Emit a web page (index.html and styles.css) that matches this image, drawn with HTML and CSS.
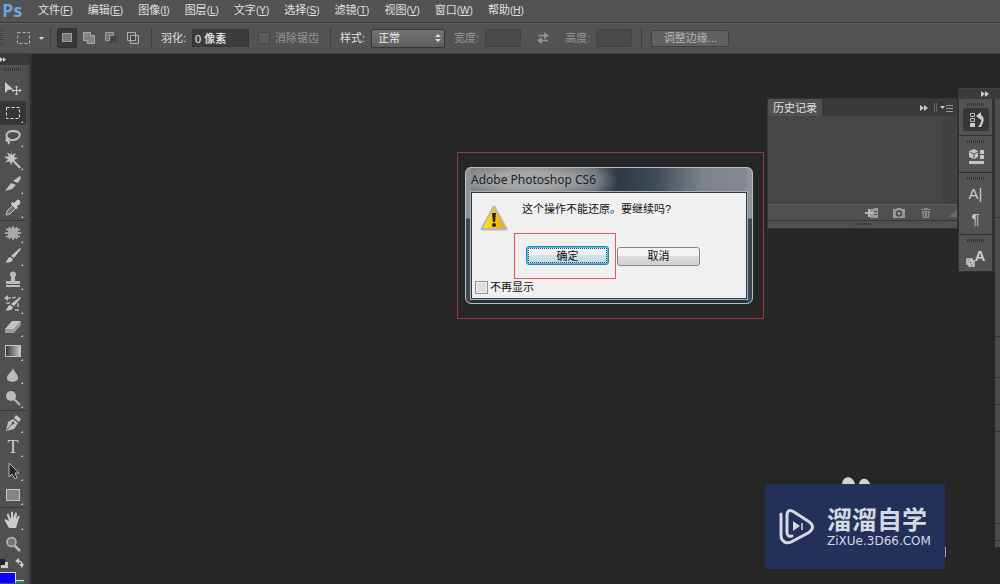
FILE: index.html
```
<!DOCTYPE html>
<html lang="zh-CN">
<head>
<meta charset="utf-8">
<meta name="viewport" content="width=device-width, initial-scale=1">
<title>Photoshop</title>
<link rel="stylesheet" href="styles.css">
</head>
<body>
<header>
  <nav class="menubar" aria-label="菜单">
    <span class="brand">Ps</span>
    <button>文件<span class="key">(<u>F</u>)</span></button>
    <button>编辑<span class="key">(<u>E</u>)</span></button>
    <button>图像<span class="key">(<u>I</u>)</span></button>
    <button>图层<span class="key">(<u>L</u>)</span></button>
    <button>文字<span class="key">(<u>Y</u>)</span></button>
    <button>选择<span class="key">(<u>S</u>)</span></button>
    <button>滤镜<span class="key">(<u>T</u>)</span></button>
    <button>视图<span class="key">(<u>V</u>)</span></button>
    <button>窗口<span class="key">(<u>W</u>)</span></button>
    <button>帮助<span class="key">(<u>H</u>)</span></button>
  </nav>
  <div class="options">
    <span class="handle"></span>
    <button class="preset" aria-label="工具预设">
      <svg width="28" height="14" viewBox="0 0 28 14"><rect x="1.500" y="1.500" width="12" height="11" fill="none" stroke="#b4b4b4" stroke-dasharray="3 2"/><path d="M23 6h5l-2.500 3z" fill="#ddd"/></svg>
    </button>
    <span class="divider"></span>
    <div class="modes">
      <button class="mode on" aria-label="新选区"><svg width="14" height="14" viewBox="0 0 14 14"><rect x="2.500" y="2.500" width="9" height="8" fill="#777" stroke="#a0a0a0"/></svg></button>
      <button class="mode" aria-label="添加到选区"><svg width="14" height="14" viewBox="0 0 14 14"><path d="M1.500 1.500h7v3h4v8h-7v-3h-4z" fill="#858585" stroke="#a8a8a8"/></svg></button>
      <button class="mode" aria-label="从选区减去"><svg width="14" height="14" viewBox="0 0 14 14"><rect x="5" y="5" width="8" height="7" fill="#454545"/><path d="M1.500 1.500h8v3h-4v5h-4z" fill="#777" stroke="#a0a0a0"/></svg></button>
      <button class="mode" aria-label="与选区交叉"><svg width="14" height="14" viewBox="0 0 14 14"><path d="M1.500 1.500h8v8h-8zM4.500 4.500h8v8h-8z" fill="none" stroke="#b0b0b0"/><path d="M5 5h4v4H5z" fill="#404040"/></svg></button>
    </div>
    <span class="divider"></span>
    <label class="field">羽化:<input class="box feather" value="0 像素"></label>
    <label class="check dim"><input type="checkbox" disabled>消除锯齿</label>
    <span class="divider"></span>
    <label class="field">样式:<span class="pick"><select><option>正常</option></select><svg width="6" height="8" viewBox="0 0 6 8"><path d="M0 3l3-3 3 3zM0 5h6L3 8z" fill="#ddd"/></svg></span></label>
    <label class="field dim">宽度:<input class="box size" disabled></label>
    <button class="swap dim" aria-label="交换宽高" disabled><svg width="14" height="12" viewBox="0 0 14 12"><path d="M2 3.500h7M5 8.500h7" stroke="#929292" stroke-width="1.500"/><path d="M8 0l5 3.500L8 7zM6 5L1 8.500 6 12z" fill="#929292"/></svg></button>
    <label class="field dim">高度:<input class="box size" disabled></label>
    <span class="divider"></span>
    <button class="refine" disabled>调整边缘...</button>
  </div>
</header>

<main class="workspace">
  <aside class="toolbox" aria-label="工具">
    <div class="toolhead"><svg width="7" height="5" viewBox="0 0 7 5"><path d="M0 0l3 2.500L0 5zM3 0l3 2.500L3 5z" fill="#ccc"/></svg></div>
    <div class="grip"></div>
    <div class="tools first">
      <button aria-label="移动"><svg viewBox="0 0 20 20"><path d="M2 3v11l3-3 5-1z" fill="#ccc"/><path d="M13.500 7v9M9 11.500h9M12 8.500L13.500 7 15 8.500M12 14.500l1.500 1.500 1.500-1.500M10.500 10L9 11.500l1.500 1.500M16.500 10l1.500 1.500-1.500 1.500" stroke="#ccc" fill="none"/></svg></button>
      <button class="on more" aria-label="矩形选框"><svg viewBox="0 0 20 20"><rect x="3.500" y="4.500" width="13" height="11" fill="none" stroke="#ddd" stroke-dasharray="3 2"/></svg></button>
      <button class="more" aria-label="套索"><svg viewBox="0 0 20 20"><path d="M6 12C1 9 4 4 10 4s8 3 6 6-7 4-10 2c-3-1-4 2-1 2 2 0 1 2 0 3" fill="none" stroke="#c4c4c4" stroke-width="1.800"/></svg></button>
      <button class="more" aria-label="魔棒"><svg viewBox="0 0 20 20"><path d="M8 1l1 4 4-2-2 4 4 1-4 2 7 7-1.500 1.500-7-7-1.500 4-1-4-5 1 3-3-4-3 5 0-2-4 4 2z" fill="#c4c4c4"/></svg></button>
      <button class="more" aria-label="切片"><svg viewBox="0 0 20 20"><path d="M2 17l6-8 5 2-4 4zM10 7l7-5 1 2-3 5z" fill="#c4c4c4"/></svg></button>
      <button class="more" aria-label="吸管"><svg viewBox="0 0 20 20"><path d="M3 17l1-4 6-6 3 3-6 6z" fill="#737373" stroke="#c4c4c4"/><path d="M9 4l2 1 3-3c3-1 4 2 3 4l-3 2 1 2-2 1-5-5z" fill="#ccc"/></svg></button>
    </div>
    <div class="tools second">
      <button class="more" aria-label="修复画笔"><svg viewBox="0 0 20 20"><path d="M6.500 4v12M10 3v14M13.500 4v12M3 6.500h14M2 10h16M3 13.500h14" stroke="#bbb" stroke-width="1.500"/><rect x="5" y="5" width="10" height="10" rx="3" fill="#a8a8a8"/></svg></button>
      <button class="more" aria-label="画笔"><svg viewBox="0 0 20 20"><path d="M17 2l1 1-7 9-3-2zM7 11l3 2c-1 4-5 4-8 3 3-1 2-4 5-5z" fill="#c8c8c8"/></svg></button>
      <button class="more" aria-label="仿制图章"><svg viewBox="0 0 20 20"><circle cx="10" cy="4.500" r="3" fill="#bbb"/><path d="M8 6h4v5h5v3H3v-3h5zM3 15h14v2H3z" fill="#bbb"/></svg></button>
      <button class="more" aria-label="历史记录画笔"><svg viewBox="0 0 20 20"><path d="M17 3l1 1-7 8-3-2zM7 11l3 2c-1 4-5 4-8 3 3-1 2-4 5-5z" fill="#c4c4c4"/><path d="M4 4h4c3 0 5 0 5-2M3 9h4M12 16h5M15 9v5" stroke="#b4b4b4" fill="none" stroke-width="1.500" stroke-dasharray="4 1"/><path d="M5 1v6L1 4z" fill="#bbb"/></svg></button>
      <button class="more" aria-label="橡皮擦"><svg viewBox="0 0 20 20"><path d="M2 12l7-8h9l-7 8z" fill="#c4c4c4"/><path d="M2 12h9v4H2zM11 12l7-8v4l-7 8z" fill="#999"/></svg></button>
      <button class="more" aria-label="渐变"><svg viewBox="0 0 20 20"><defs><linearGradient id="ramp"><stop stop-color="#333"/><stop offset="1" stop-color="#ccc"/></linearGradient></defs><rect x="2.500" y="4.500" width="15" height="11" fill="url(#ramp)" stroke="#c4c4c4"/></svg></button>
      <button class="more" aria-label="模糊"><svg viewBox="0 0 20 20"><path d="M10 3c1 4 5 6 5 10 0 5-11 5-11 0 0-4 5-6 6-10z" fill="#bbb"/></svg></button>
      <button class="more" aria-label="减淡"><svg viewBox="0 0 20 20"><circle cx="8" cy="8" r="5" fill="#bbb"/><path d="M11 11l6 6" stroke="#bbb" stroke-width="2"/></svg></button>
    </div>
    <div class="tools third">
      <button class="more" aria-label="钢笔"><svg viewBox="0 0 20 20"><path d="M3 18l2-9 5-3 5 4-4 6zM11 5l2-3 5 4-2 3z" fill="#c4c4c4"/><path d="M4 17l5-6" stroke="#555"/><circle cx="10" cy="10" r="1.500" fill="#555"/></svg></button>
      <button class="more type" aria-label="文字">T</button>
      <button class="more" aria-label="路径选择"><svg viewBox="0 0 20 20"><path d="M6 2v14l3-3 3 5 2-1-2-5h4z" fill="#252525" stroke="#bbb"/></svg></button>
      <button class="more" aria-label="矩形"><svg viewBox="0 0 20 20"><rect x="3.500" y="4.500" width="13" height="11" fill="#858585" stroke="#c4c4c4"/></svg></button>
    </div>
    <div class="tools fourth">
      <button class="more" aria-label="抓手"><svg viewBox="0 0 20 20"><path d="M6 18l-4-7c-1-2 1-2 2-1l2 1-2-6c0-2 2-2 2 0l2 4V3c0-2 2-2 2 0v5l2-5c1-1 2 0 2 1l-1 5 2-3c2-1 2 1 1 2l-3 10z" fill="#ccc"/></svg></button>
      <button aria-label="缩放"><svg viewBox="0 0 20 20"><circle cx="8.500" cy="8" r="4.500" fill="#777" stroke="#bbb" stroke-width="1.500"/><path d="M12 12l5 5" stroke="#bbb" stroke-width="2.500"/></svg></button>
    </div>
    <div class="reset">
      <svg width="8" height="10" viewBox="0 0 8 10"><path d="M3 4h5v6H1V7h2z" fill="#ccc"/><path d="M0 1h5v6H0z" fill="#222"/></svg>
      <svg width="9" height="10" viewBox="0 0 9 10"><path d="M3 3c3 0 4 1 4 4" fill="none" stroke="#ccc" stroke-width="1.500"/><path d="M0 3l4-3v6zM4 6h5L7 10z" fill="#ccc"/></svg>
    </div>
    <div class="swatches"><span class="front"></span><span class="back"></span></div>
  </aside>

  <div class="marked">
    <section class="dialog" role="dialog" aria-labelledby="dialog-title">
      <h1 id="dialog-title">Adobe Photoshop CS6</h1>
      <div class="sheet">
        <div class="message">
          <svg width="28" height="26" viewBox="0 0 28 26"><defs><linearGradient id="amber" x2="1" y2="0"><stop stop-color="#ffe51f"/><stop offset=".5" stop-color="#f6c516"/><stop offset="1" stop-color="#eaa51c"/></linearGradient></defs><path d="M14 2L2 24h24z" fill="url(#amber)" stroke="#b8b8b0" stroke-width="3" stroke-linejoin="round"/><path d="M14 3L3 23h22z" fill="url(#amber)"/><path d="M12 8h4l-1 9h-2z" fill="#222"/><circle cx="14" cy="20" r="2" fill="#222"/></svg>
          <p>这个操作不能还原。要继续吗?</p>
        </div>
        <div class="answers">
          <div class="ring"><button class="answer primary">确定</button></div>
          <button class="answer">取消</button>
        </div>
        <label class="again"><input type="checkbox">不再显示</label>
      </div>
    </section>
  </div>

  <div class="docks">
    <section class="history">
      <div class="tabs">
        <button class="tab">历史记录</button>
        <svg width="34" height="10" viewBox="0 0 34 10"><path d="M0 2l4 3-4 3zM4 2l4 3-4 3z" fill="#ccc"/><path d="M14.500 0v9M16.500 0v9" stroke="#666"/><path d="M20 3h5l-2.500 3z" fill="#ccc"/><path d="M26 2.500h7M26 5.500h7M26 8.500h7" stroke="#999"/></svg>
      </div>
      <div class="states"></div>
      <div class="actions">
        <button aria-label="从当前状态创建新文档"><svg width="14" height="12" viewBox="0 0 14 12"><path d="M5 2h3l1-1h4v10H5z" fill="#999"/><path d="M9 4h3v1H9zM9 7h3v1H9z" fill="#505050"/><path d="M0 6h8M4 2v8" stroke="#bbb" stroke-width="2"/></svg></button>
        <button aria-label="创建新快照"><svg width="14" height="12" viewBox="0 0 14 12"><path d="M1 2h3l1-1h4l1 1h3v9H1z" fill="#999"/><circle cx="7" cy="6.500" r="2.500" fill="#999" stroke="#484848" stroke-width="1.500"/></svg></button>
        <button aria-label="删除当前状态"><svg width="14" height="12" viewBox="0 0 14 12"><path d="M2 2h3V1h4v1h3v1H2zM3 4h8l-1 7H4z" fill="#8a8a8a"/><path d="M5.500 5v5M8.500 5v5" stroke="#555"/></svg></button>
        <svg width="8" height="8" viewBox="0 0 8 8"><path d="M0 8l8-8v8z" fill="#696969"/></svg>
      </div>
      <div class="grip foot"></div>
    </section>
    <aside class="rail">
      <div class="railhead"><svg width="8" height="6" viewBox="0 0 8 6"><path d="M0 0l4 3-4 3zM4 0l4 3-4 3z" fill="#ccc"/></svg></div>
      <div class="columns">
        <div class="icons">
          <div class="set"><div class="grip"></div><button class="on" aria-label="历史记录"><svg viewBox="0 0 20 20"><path d="M4.500 3.500h4v3h-4zM4.500 8.500h4v3h-4z" fill="none" stroke="#bbb"/><path d="M4 13h5v4H4z" fill="#ccc"/><path d="M10 6l5-4v3c4 2 3 7 0 12h-3c3-4 4-7 3-9v2z" fill="#ccc"/></svg></button></div>
          <div class="set"><div class="grip"></div><button aria-label="属性"><svg viewBox="0 0 20 20"><path d="M3 4l5-2 4 2v6l-4 2-5-2zM14 3h4v4h-4zM14 8h4v4h-4zM3 14h15v3H3z" fill="#c4c4c4"/><path d="M4 5l4 2 4-2M8 7v4" stroke="#555" fill="none"/></svg></button></div>
          <div class="set"><div class="grip"></div><button class="letter" aria-label="字符">A|</button><button class="letter" aria-label="段落">¶</button></div>
          <div class="set"><div class="grip"></div><button class="letter styles" aria-label="字符样式"><svg viewBox="0 0 9 9"><path d="M1 1h5v5H1zM3 3h5v5H3z" fill="none" stroke="#ccc" stroke-width="1.500"/></svg><b>A</b></button></div>
        </div>
        <div class="edge"><i class="long"></i><i class="long"></i><i class="row"></i><i class="short"></i><i class="short"></i><i class="tall"></i><i class="end"></i><i class="last"></i></div>
      </div>
    </aside>
  </div>

  <div class="watermark">
    <svg class="mark" width="36" height="38" viewBox="0 0 36 38"><path d="M2 6v21c0 7 6 10 12 6l15-8c6-4 6-8 0-12L15 4C10 1 8 3 8 8v16c0 4 2 5 5 4" fill="none" stroke="#d5d9e2" stroke-width="3" stroke-linecap="round"/><path d="M14 13l7 5-7 5z" fill="#d5d9e2"/><path d="M23 15v7" stroke="#d5d9e2" stroke-width="1.500"/></svg>
    <div class="wordmark"><strong>溜溜自学</strong><span>ZiXUe.3D66.COM</span></div>
    <svg class="dots" width="30" height="7" viewBox="0 0 30 7"><path d="M0 7c1-9 11-9 13 0zM17 7c1-7 9-7 11 0z" fill="#d4d4d4"/></svg>
    <i class="sliver"></i>
  </div>
</main>
</body>
</html>
```
FILE: styles.css
```
* { box-sizing: border-box; }
body {
  margin: 0;
  min-height: 100vh;
  display: flex;
  flex-direction: column;
  background: #262626;
  color: #e0e0e0;
  font: 11px/16px "Liberation Sans", "Noto Sans CJK SC", sans-serif;
  overflow: hidden;
}
button, input, select { font: inherit; color: inherit; margin: 0; padding: 0; border: 0; background: none; }
svg { display: block; }
header { background: #535353; }

.menubar { display: flex; align-items: center; height: 22px; gap: 15px; padding: 0 0 2px 2px; }
.menubar button { white-space: nowrap; height: 20px; }
.brand { width: 21px; font: bold 18px/20px "Open Sans", sans-serif; color: #6fa5d8; }
.key { font-size: 10px; }

.options {
  display: flex;
  align-items: center;
  height: 32px;
  gap: 9px;
  border-top: 1px solid #3a3a3a;
  border-bottom: 1px solid #404040;
  box-shadow: inset 0 1px #606060;
}
.handle { width: 3px; height: 18px; background: repeating-linear-gradient(#3d3d3d 0 1px, #5c5c5c 1px 2px); }
.preset { margin-left: 4px; }
.divider { width: 1px; height: 20px; background: #3d3d3d; }
.preset + .divider { margin-left: -3px; }
.modes { display: flex; gap: 2px; margin: 0 -1px 0 -3px; }
.mode { width: 20px; height: 20px; display: grid; place-items: center; }
.mode.on { background: #383838; border: 1px solid #2e2e2e; border-radius: 2px; }
.field { display: flex; align-items: center; gap: 6px; white-space: nowrap; }
.dim { color: #969696; }
.box { height: 18px; border: 1px solid #343434; background: #3c3c3c; padding: 0 2px; }
.feather { width: 57px; color: #f0f0f0; font-weight: 500; }
.box.size { width: 36px; background: #4a4a4a; border-color: #444; }
.check { display: flex; align-items: center; gap: 5px; white-space: nowrap; }
.check input { appearance: none; width: 12px; height: 12px; border: 1px solid #444; background: #5c5c5c; border-radius: 2px; }
.check + .divider { margin-left: 2px; }
.pick { display: grid; align-items: center; }
.pick select {
  appearance: none;
  grid-area: 1 / 1;
  width: 74px;
  height: 19px;
  padding-left: 6px;
  border: 1px solid #353535;
  border-radius: 2px;
  background: linear-gradient(#737373, #5e5e5e);
  color: #f0f0f0;
}
.pick svg { grid-area: 1 / 1; justify-self: end; margin-right: 4px; }
.swap { margin: 0 6px; }
.refine {
  width: 78px;
  height: 17px;
  line-height: 14px;
  border: 1px solid #414141;
  border-radius: 2px;
  background: #616161;
  color: #b4b4b4;
}

.workspace { flex: 1; position: relative; display: flex; align-items: stretch; }
.toolbox { width: 32px; background: #505050; border-right: 2px solid #303030; box-shadow: inset -3px 0 #484848; }
.toolhead { height: 11px; background: #383838; padding-top: 3px; }
.grip { width: 18px; height: 3px; margin: 3px auto 0; background: repeating-linear-gradient(90deg, #333 0 1px, #555 1px 2px); }
.toolbox > .grip { margin: 3px 4px 6px; }
.tools { display: grid; grid-auto-rows: 1fr; width: 26px; border-bottom: 1px solid #383838; }
.tools button { position: relative; display: grid; place-items: center; }
.tools svg { width: 20px; height: 20px; }
.tools .on { background: #363636; border-radius: 2px; }
.more::after {
  content: "";
  position: absolute;
  right: 3px;
  bottom: 2px;
  border: 1px solid transparent;
  border-right-color: #ddd;
  border-bottom-color: #ddd;
}
.first { height: 144px; }
.second { height: 190px; }
.third { height: 97px; }
.fourth { height: 48px; border: 0; }
.tools .type { font: 18px/20px "Liberation Serif", serif; color: #ccc; }
.reset { display: flex; gap: 7px; margin-top: 2px; }
.swatches { display: flex; align-items: flex-end; height: 11px; margin-top: 4px; }
.front { width: 16px; height: 11px; background: #0a00ff; border: 1px solid #ddd; border-width: 1px 1px 0 0; }
.back { width: 8px; height: 3px; background: #2d8a46; border-top: 1px solid #ddd; }

.marked { position: absolute; left: 457px; top: 98px; padding: 14px 10px 14px 7px; border: 1px solid #99393e; }
.dialog {
  width: 288px;
  padding: 0 5px 4px;
  border: 1px solid #b9c0c4;
  border-radius: 6px;
  background:
    linear-gradient(#8d9297 0 50px, #3c4a55 51px) left / 5px 100% no-repeat,
    linear-gradient(#8d9297 0 50px, #3c4a55 51px) right / 5px 100% no-repeat,
    linear-gradient(#26323c, #26323c) bottom / 100% 4px no-repeat,
    radial-gradient(90px 20px at 62px 12px, #a4a6a8 40%, transparent) top / 100% 25px no-repeat,
    linear-gradient(90deg, #6c7073 0 35%, #666d73 45%, #2d3944 53%, #3c4855 65%, #7d838a 83%, #858a90);
}
.dialog h1 { margin: 0; height: 24px; font: 12px/23px "Noto Sans", sans-serif; color: #222; }
.sheet { height: 107px; border: 1px solid #303a43; background: #f0f0f0; color: #111; box-shadow: 0 0 0 1px #a9b0b5; }
.message { display: flex; height: 40px; padding: 12px 0 0 8px; gap: 14px; }
.message p { margin: -4px 0 0; line-height: 16px; }
.answers { display: flex; align-items: center; gap: 1px; padding-left: 42px; }
.ring { border: 1px solid #e0575c; padding: 12px 6px 13px 11px; }
.answer {
  display: block;
  width: 83px;
  height: 19px;
  line-height: 16px;
  border: 1px solid #858585;
  border-radius: 3px;
  background: linear-gradient(#f4f4f4 0 45%, #dcdcdc 50%, #d0d0d0);
}
.answer.primary {
  border-color: #2f7fa8;
  background: linear-gradient(#edf3f6 0 45%, #d3e2ea 50%, #c5dae5);
  box-shadow: inset 0 0 0 1px #48c0ea;
  outline: 1px dotted #344;
  outline-offset: -3px;
}
.again { display: flex; align-items: center; gap: 2px; padding-left: 3px; }
.again input { appearance: none; width: 13px; height: 13px; border: 1px solid #8e8f8f; background: #dedede; box-shadow: inset 0 0 0 1px #f4f4f4; }

.docks { position: absolute; top: 34px; right: 0; display: flex; align-items: flex-start; }
.history { width: 191px; margin-top: 10px; background: #505050; border: 1px solid #343434; }
.tabs { display: flex; justify-content: space-between; align-items: center; height: 17px; background: #393939; padding-right: 3px; }
.tab { width: 54px; height: 17px; background: #505050; }
.states { height: 88px; border-right: 14px solid #414141; background: #464646; }
.actions { display: flex; align-items: center; justify-content: flex-end; gap: 13px; height: 17px; border-top: 1px solid #606060; border-bottom: 1px solid #363636; }
.actions > svg { margin-left: 3px; }
.foot { height: 2px; margin: 2px auto 3px; }
.rail { width: 42px; }
.railhead { display: flex; align-items: center; justify-content: flex-end; height: 11px; padding-right: 11px; background: #3b3b3b; border-top: 1px solid #444; }
.columns { display: flex; align-items: flex-start; }
.icons { width: 37px; border: solid #303030; border-width: 0 3px 0 1px; background: #303030; }
.set { display: grid; justify-items: center; background: #535353; padding: 1px 0 4px; margin-bottom: 1px; }
.set button { width: 26px; height: 23px; margin-top: 2px; display: grid; place-items: center; }
.set .on { background: #363636; border-radius: 3px; }
.set svg { width: 20px; height: 20px; }
.set .letter { color: #ccc; font: 15px/20px "Liberation Sans", sans-serif; }
.set .styles { display: flex; align-items: center; justify-content: center; }
.set .styles svg { width: 9px; height: 9px; align-self: flex-end; }
.edge { width: 5px; display: grid; gap: 1px; background: #303030; }
.edge i { background: #4c4c4c; }
.long { height: 118px; }
.row { height: 40px; }
.short { height: 26px; }
.tall { height: 91px; }
.end { height: 16px; }
.last { height: 6px; }

.watermark { position: absolute; right: 55px; bottom: 15px; display: flex; gap: 12px; width: 180px; height: 85px; padding: 24px 0 0 14px; background: #22305a; color: #d5d9e2; }
.wordmark { margin-top: -6px; }
.watermark strong { display: block; font: bold 25px/32px "Noto Sans CJK SC", sans-serif; }
.watermark span { display: block; font: 12px/14px "DejaVu Sans", sans-serif; }
.mark { flex: none; }
.dots { position: absolute; left: 77px; top: -7px; }
.sliver { position: absolute; right: -1px; bottom: 12px; width: 1px; height: 10px; background: #a0a0a0; }
```
